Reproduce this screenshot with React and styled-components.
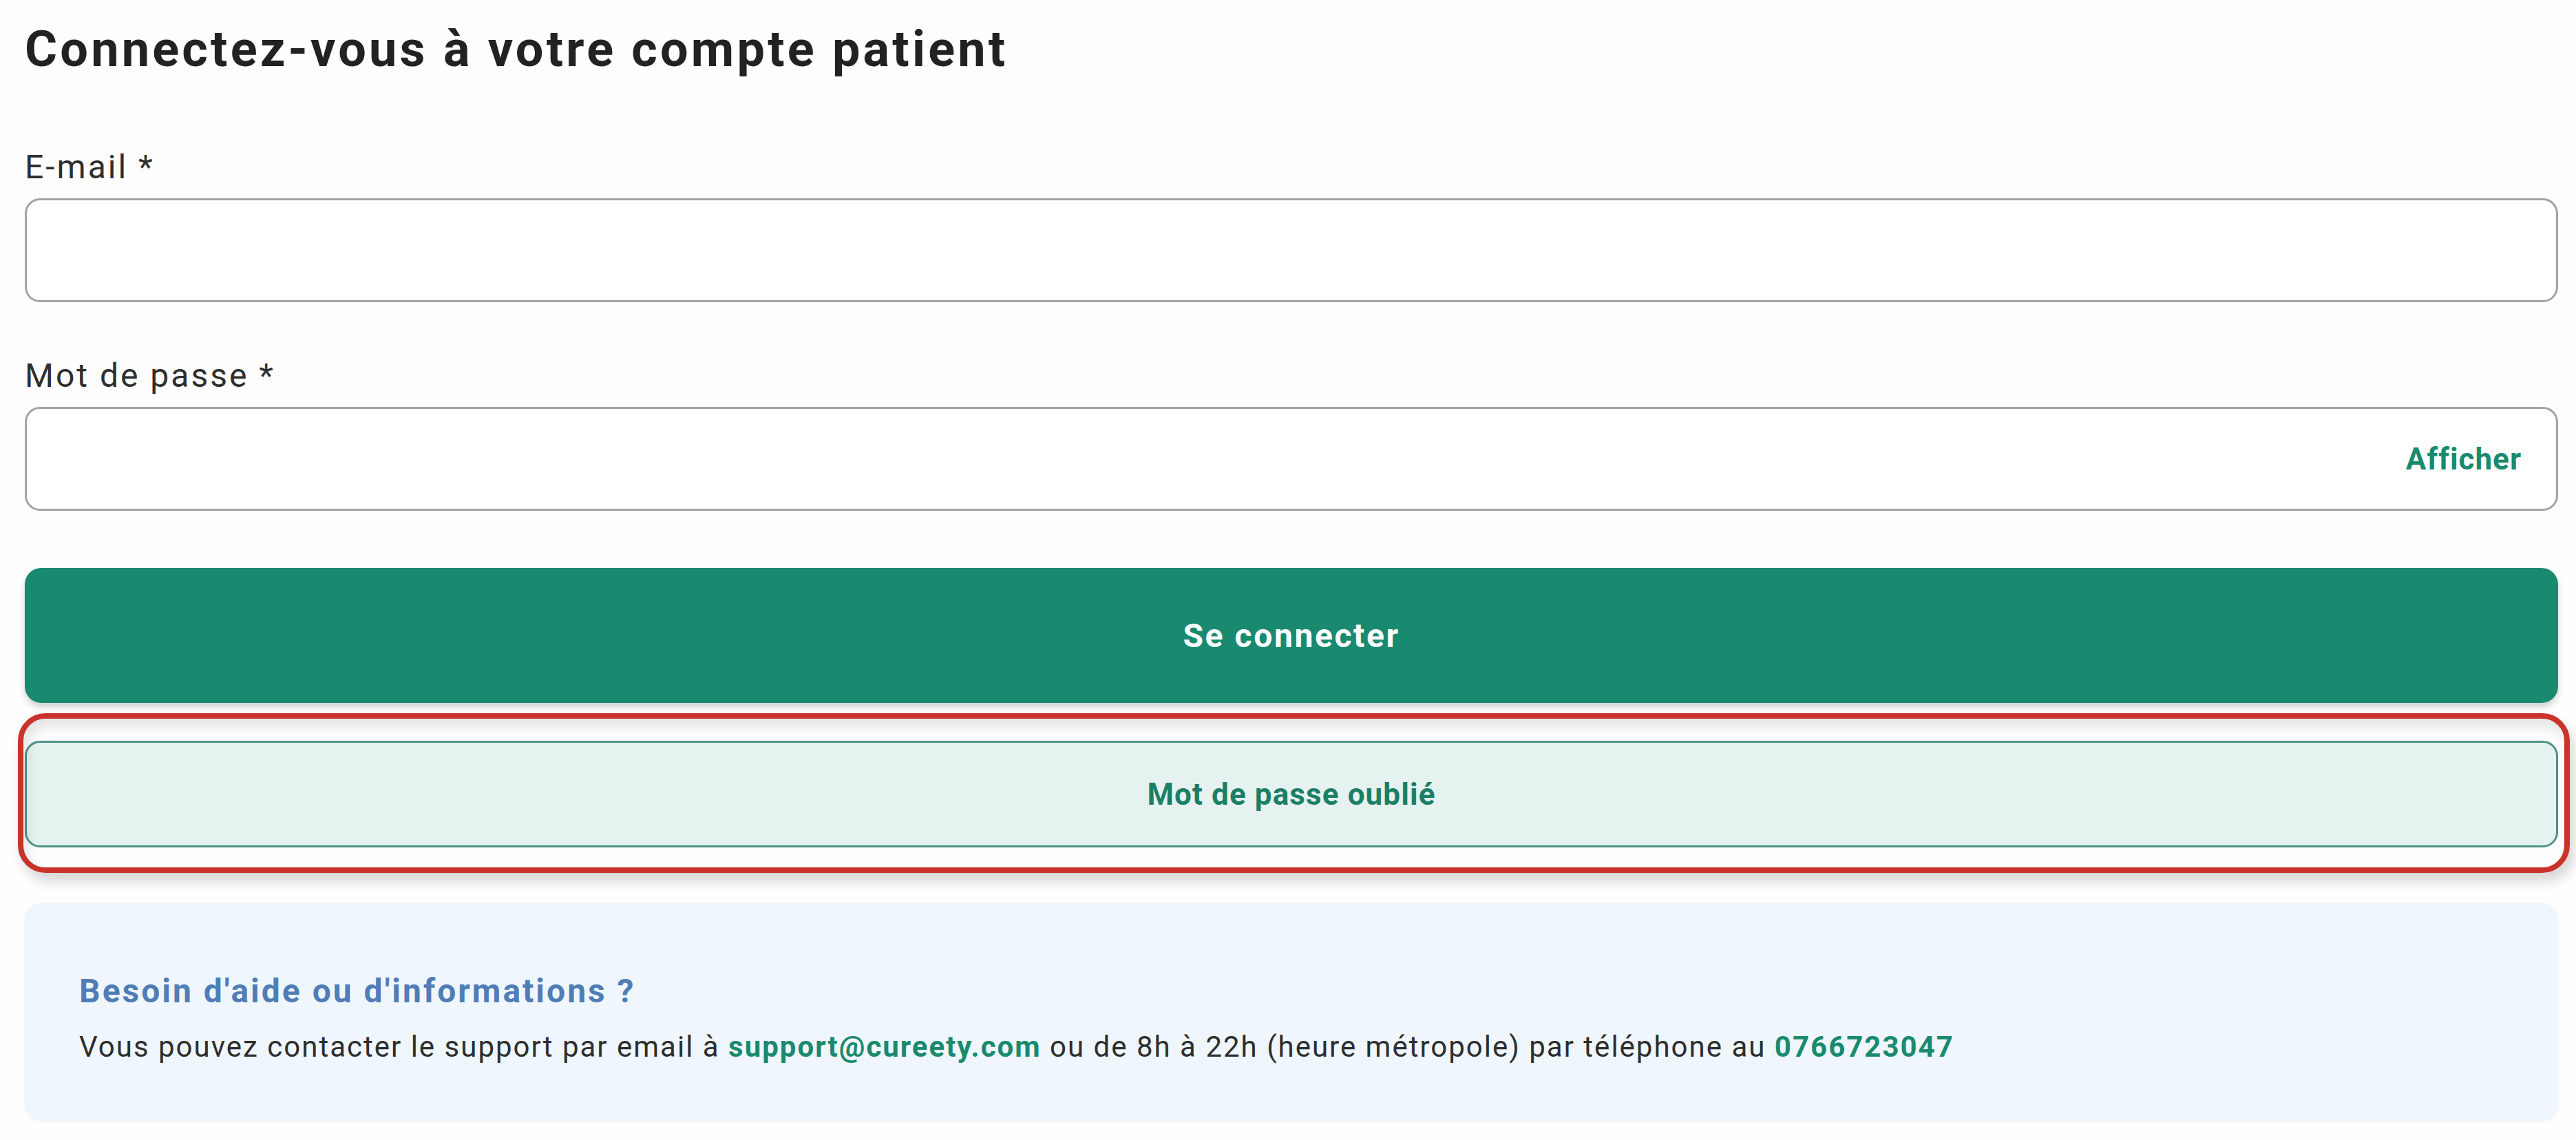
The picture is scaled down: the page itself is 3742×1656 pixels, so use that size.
import React from "react";
import styled, { createGlobalStyle } from "styled-components";

const GlobalStyle = createGlobalStyle`
  html, body {
    margin: 0;
    padding: 0;
    background: #fefefe;
  }
  body {
    font-family: Roboto, "Noto Sans", "Liberation Sans", sans-serif;
    color: #2b2b2b;
  }
  * {
    box-sizing: border-box;
  }
`;

const Page = styled.div`
  width: 3742px;
  padding: 29px 26px 30px 36px;
  display: flex;
  flex-direction: column;
`;

const Title = styled.h1`
  margin: 0;
  font-size: 72px;
  line-height: 86px;
  font-weight: 700;
  letter-spacing: 4.2px;
  color: #222;
`;

const Field = styled.div`
  display: flex;
  flex-direction: column;
  gap: 16px;
  margin-top: ${(p) => p.$top}px;
`;

const Label = styled.label`
  font-size: 48px;
  line-height: 58px;
  letter-spacing: 3px;
  color: #2e2e2e;
`;

const InputBox = styled.div`
  height: 151px;
  border: 3px solid #a3a3a3;
  border-radius: 22px;
  background: #fff;
  display: flex;
  align-items: center;
  justify-content: flex-end;
  padding: 0 50px;
`;

const ShowLink = styled.span`
  font-size: 44px;
  font-weight: 700;
  letter-spacing: 1px;
  color: #1a8a6e;
`;

const PrimaryButton = styled.button`
  margin-top: 83px;
  height: 196px;
  width: 100%;
  border: none;
  border-radius: 24px;
  background: #198970;
  color: #fff;
  font-family: inherit;
  font-size: 48px;
  font-weight: 700;
  letter-spacing: 2.6px;
  box-shadow: 0 6px 10px rgba(0, 0, 0, 0.18);
`;

const HighlightWrap = styled.div`
  position: relative;
  margin-top: 55px;
`;

const SecondaryButton = styled.button`
  height: 155px;
  width: 100%;
  border: 3px solid #4f9484;
  border-radius: 22px;
  background: #e5f2ef;
  color: #1b7f66;
  font-family: inherit;
  font-size: 44px;
  font-weight: 700;
  letter-spacing: 1.1px;
`;

const RedRing = styled.div`
  position: absolute;
  top: -40px;
  bottom: -37px;
  left: -10px;
  right: -17px;
  border: 8px solid #c9332b;
  border-radius: 40px;
  pointer-events: none;
  box-shadow: 6px 12px 18px rgba(0, 0, 0, 0.16),
    inset 6px 12px 18px rgba(0, 0, 0, 0.1);
`;

const HelpCard = styled.section`
  margin-top: 81px;
  height: 315px;
  border-radius: 24px;
  background: #eff6fd;
  box-shadow: 0 2px 6px rgba(0, 0, 0, 0.05);
  padding: 99px 79px 0;
  display: flex;
  flex-direction: column;
  gap: 26px;
`;

const HelpTitle = styled.h2`
  margin: 0;
  font-size: 48px;
  line-height: 58px;
  font-weight: 700;
  letter-spacing: 3px;
  color: #4f7db6;
`;

const HelpText = styled.p`
  margin: 0;
  font-size: 42px;
  line-height: 52px;
  letter-spacing: 2px;
  color: #2e2e2e;
`;

const Strong = styled.span`
  font-weight: 700;
  color: #1a8a6e;
`;

export default function App() {
  return (
    <>
      <GlobalStyle />
      <Page>
        <Title>Connectez-vous à votre compte patient</Title>

        <Field $top={99}>
          <Label>E-mail *</Label>
          <InputBox />
        </Field>

        <Field $top={78}>
          <Label>Mot de passe *</Label>
          <InputBox>
            <ShowLink>Afficher</ShowLink>
          </InputBox>
        </Field>

        <PrimaryButton>Se connecter</PrimaryButton>

        <HighlightWrap>
          <SecondaryButton>Mot de passe oublié</SecondaryButton>
          <RedRing />
        </HighlightWrap>

        <HelpCard>
          <HelpTitle>Besoin d'aide ou d'informations ?</HelpTitle>
          <HelpText>
            Vous pouvez contacter le support par email à{" "}
            <Strong>support@cureety.com</Strong> ou de 8h à 22h (heure
            métropole) par téléphone au <Strong>0766723047</Strong>
          </HelpText>
        </HelpCard>
      </Page>
    </>
  );
}
